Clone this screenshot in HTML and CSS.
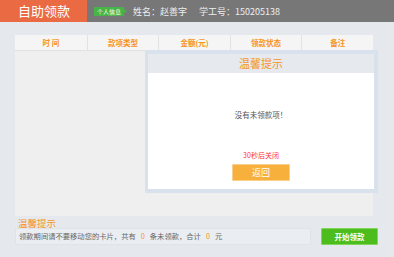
FILE: index.html
```html
<!DOCTYPE html>
<html lang="zh-CN">
<head>
    <meta charset="UTF-8">
    <meta name="viewport" content="width=device-width, initial-scale=1.0">
    <title>自助领款</title>
    <link rel="stylesheet" href="styles.css">
</head>
<body>
    <header class="topbar">
        <div class="brand">自助领款</div>
        <div class="user">
            <span class="tag">个人信息</span>
            <span class="field">姓名：赵善宇</span>
            <span class="field">学工号：150205138</span>
        </div>
    </header>

    <main class="main">
        <div class="panel">
            <div class="thead">
                <div class="th">时 间</div>
                <div class="th">款项类型</div>
                <div class="th">金额(元)</div>
                <div class="th">领款状态</div>
                <div class="th">备注</div>
            </div>
            <div class="tbody"></div>

            <!-- 提示弹窗 -->
            <div class="dialog">
                <div class="dialog-title">温馨提示</div>
                <div class="dialog-body">
                    <p class="message">没有未领款项！</p>
                    <p class="countdown">30秒后关闭</p>
                    <button class="btn-back">返回</button>
                </div>
            </div>
        </div>

        <div class="footer">
            <div class="tips">
                <div class="tips-title">温馨提示</div>
                <div class="tips-text">
                    领款期间请不要移动您的卡片，共有<span class="num">0</span>条未领款，合计<span class="num">0</span>元
                </div>
            </div>
            <button class="btn-start">开始领款</button>
        </div>
    </main>
</body>
</html>
```

FILE: styles.css
```css
* {
    margin: 0;
    padding: 0;
    box-sizing: border-box;
    font-family: "Noto Sans CJK SC", "Liberation Sans", sans-serif;
}

body {
    background-color: #e5e9ee;
    width: 394px;
    height: 257px;
    overflow: hidden;
}

/* 顶部 */
.topbar {
    display: flex;
    height: 22px;
    background-color: #777777;
}

.brand {
    width: 87px;
    background-color: #e96a43;
    color: #fff;
    font-size: 13px;
    line-height: 22px;
    padding-left: 18px;
}

.user {
    display: flex;
    align-items: center;
    padding-left: 7px;
    color: #eeeeee;
    font-size: 9px;
}

.tag {
    position: relative;
    background-color: #45b549;
    color: #fff;
    font-size: 6px;
    line-height: 9px;
    padding: 0 3px;
    border-radius: 1px;
    margin-right: 9px;
}

.tag::after {
    content: "";
    position: absolute;
    right: -3px;
    top: 2px;
    border-left: 3px solid #45b549;
    border-top: 2.5px solid transparent;
    border-bottom: 2.5px solid transparent;
}

.field {
    margin-right: 12px;
}

/* 列表 */
.main {
    padding: 13px 16px 0 15px;
}

.panel {
    position: relative;
    width: 358px;
    height: 181px;
    background-color: #efefef;
}

.thead {
    display: grid;
    grid-template-columns: repeat(5, 1fr);
    height: 16px;
    background-color: #f5f5f5;
    border-bottom: 1px solid #e2e2e2;
}

.th {
    color: #f7941d;
    font-size: 7.5px;
    font-weight: bold;
    line-height: 15px;
    text-align: center;
    border-left: 1px solid #e2e2e2;
}

.th:first-child {
    border-left: none;
}

/* 弹窗 */
.dialog {
    position: absolute;
    left: 130px;
    top: 15px;
    width: 233px;
    height: 143px;
    border: 4px solid #d9e2ec;
    border-left-width: 3px;
    background-color: #e6e9ee;
    display: flex;
    flex-direction: column;
}

.dialog-title {
    height: 19px;
    color: #f7941d;
    font-size: 11px;
    line-height: 18px;
    text-align: center;
}

.dialog-body {
    flex: 1;
    background-color: #fff;
    display: flex;
    flex-direction: column;
    align-items: center;
}

.message {
    margin-top: 36px;
    color: #555;
    font-size: 7.5px;
}

.countdown {
    margin-top: 30px;
    color: #f33;
    font-size: 7px;
}

.btn-back {
    margin-top: 4px;
    width: 58px;
    height: 17px;
    border: 1px solid #f9d08a;
    border-radius: 1px;
    background-color: #f8b03c;
    color: #fff;
    font-size: 9px;
}

/* 底部 */
.footer {
    display: flex;
    align-items: flex-start;
    padding-top: 2px;
}

.tips {
    width: 296px;
}

.tips-title {
    color: #f7941d;
    font-size: 9.5px;
    line-height: 10px;
    padding-left: 3px;
}

.tips-text {
    height: 17px;
    background-color: #eaedf1;
    border: 1px solid #e0e4e9;
    color: #666;
    font-size: 7.3px;
    line-height: 15px;
    padding-left: 3px;
}

.num {
    color: #f7941d;
    margin: 0 5px;
}

.btn-start {
    margin-left: auto;
    margin-top: 10px;
    width: 57px;
    height: 17px;
    border: 1px solid #7fd65a;
    border-radius: 1px;
    background-color: #4cbd1c;
    color: #fff;
    font-size: 7.5px;
    font-weight: bold;
}
```
